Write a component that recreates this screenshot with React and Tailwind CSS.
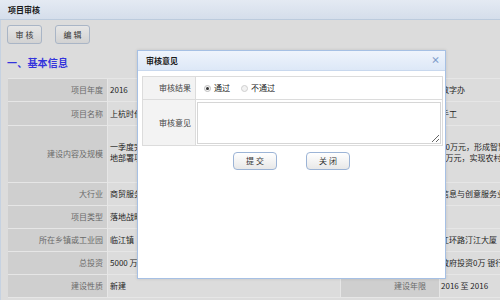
export default function App() {
  const rows = [
    { l1: '项目年度', v1: '2016', l2: '主管单位', v2: '数字办', h: 'h-[23px]' },
    { l1: '项目名称', v1: '上杭时代智慧城市建设项目', l2: '建设单位', v2: '手工', h: 'h-[24px]' },
    { l1: '建设内容及规模', v1: ['一季度完成项目前期工作', '地部署项目建设'], l2: '', v2: ['00万元，形成智慧产业', '5万元，实现农村电商全覆盖'], h: 'h-[57px]' },
    { l1: '大行业', v1: '商贸服务业', l2: '小行业', v2: '信息与创意服务业', h: 'h-[23px]' },
    { l1: '项目类型', v1: '落地战略性新兴产业', l2: '项目属性', v2: '', h: 'h-[23px]' },
    { l1: '所在乡镇或工业园', v1: '临江镇', l2: '项目地址', v2: '江环路汀江大厦', h: 'h-[23px]' },
    { l1: '总投资', v1: '5000 万元', l2: '资金来源', v2: '政府投资0万 银行贷款', h: 'h-[23px]' },
    { l1: '建设性质', v1: '新建', l2: '建设年限', v2: '2016 至 2016', h: 'h-[23px]' },
  ];

  const renderVal = (v) =>
    Array.isArray(v) ? (
      <div className="flex flex-col leading-[11px] pb-[4px]">
        {v.map((t, i) => (
          <span key={i} className="whitespace-nowrap">{t}</span>
        ))}
      </div>
    ) : (
      <span className="whitespace-nowrap">{v}</span>
    );

  return (
    <div className="relative w-[500px] h-[300px] overflow-hidden bg-[#dcdcdc] font-['Noto_Sans_CJK_SC',sans-serif] text-[8px] text-[#1e1e1e]">
      {/* panel header */}
      <div className="h-[20px] flex items-center pl-[8px] bg-gradient-to-b from-[#e4eaf3] to-[#d5deeb] border-b border-[#bccbdd] font-bold text-[#1a1a1a]">
        项目审核
      </div>
      <div className="border-l border-[#c6d2e1] h-[280px] flex flex-col">
        {/* toolbar */}
        <div className="flex gap-[13px] pl-[6px] pt-[5px]">
          <div className="w-[35px] h-[19px] rounded-[3px] border border-[#a9b5c6] bg-gradient-to-b from-[#e6e6e6] to-[#d2d2d2] flex items-center justify-center text-[#333]">
            审 核
          </div>
          <div className="w-[35px] h-[19px] rounded-[3px] border border-[#a9b5c6] bg-gradient-to-b from-[#e6e6e6] to-[#d2d2d2] flex items-center justify-center text-[#333]">
            编 辑
          </div>
        </div>
        {/* heading */}
        <div className="mt-[9px] h-[20px] leading-[20px] pl-[6px] text-[10px] font-bold text-[#3434dc] tracking-[0.2px]">
          一、基本信息
        </div>
        {/* table */}
        <div className="mt-[5px] ml-[7px] w-[600px] border-t border-[#e6e6e6] flex flex-col">
          {rows.map((r, i) => (
            <div key={i} className={`flex ${r.h} border-b border-[#e6e6e6]`}>
              <div className="w-[100px] shrink-0 bg-[#cfcfcf] border-r border-[#e6e6e6] flex items-center justify-end pr-[4px] text-[#6a6a6a]">
                {r.l1}
              </div>
              <div className="w-[232px] shrink-0 flex items-center pl-[2px] overflow-hidden">
                {renderVal(r.v1)}
              </div>
              <div className="w-[100px] shrink-0 bg-[#cfcfcf] border-x border-[#e6e6e6] flex items-center justify-end pr-[13px] text-[#6a6a6a]">
                {r.l2}
              </div>
              <div className="flex-1 flex items-center pl-[1px] overflow-hidden">
                {renderVal(r.v2)}
              </div>
            </div>
          ))}
        </div>
      </div>

      {/* dialog */}
      <div className="absolute left-[137px] top-[50px] w-[309px] h-[229px] border border-[#a6c0e4] bg-white shadow-[0_0_3px_rgba(0,0,0,0.12)] flex flex-col">
        <div className="relative h-[20px] shrink-0 flex items-center pl-[8px] bg-gradient-to-b from-[#eff4fc] to-[#dde8f7] border-b border-[#c8d8ee] font-bold text-[#1a1a1a]">
          审核意见
          <span className="absolute right-[5px] top-[3px] text-[9px] leading-[12px] text-[#7d9dca]">×</span>
        </div>
        <div className="mt-[5px] ml-[4px] w-[301px] border border-[#dcdcdc] flex flex-col text-[#222]">
          <div className="flex h-[23px] border-b border-[#dcdcdc]">
            <div className="w-[53px] shrink-0 bg-[#f3f3f3] border-r border-[#dcdcdc] flex items-center justify-end pr-[4px] text-[#444]">
              审核结果
            </div>
            <div className="flex items-center pl-[8px]">
              <span className="w-[7px] h-[7px] rounded-full border border-[#bdbdbd] bg-[#f4f4f4] flex items-center justify-center">
                <span className="w-[3px] h-[3px] rounded-full bg-[#333]"></span>
              </span>
              <span className="ml-[3px]">通过</span>
              <span className="ml-[11px] w-[7px] h-[7px] rounded-full border border-[#cfcfcf] bg-[#f2f2f2]"></span>
              <span className="ml-[3px]">不通过</span>
            </div>
          </div>
          <div className="flex h-[45px]">
            <div className="w-[53px] shrink-0 bg-[#f3f3f3] border-r border-[#dcdcdc] flex items-center justify-end pr-[4px] text-[#444]">
              审核意见
            </div>
            <div className="flex-1 pl-[1px] pt-[2px]">
              <textarea className="block w-[244px] h-[42px] border border-[#d6d6d6] outline-none bg-white"></textarea>
            </div>
          </div>
        </div>
        <div className="mt-[6px] flex justify-center gap-[29px]">
          <div className="w-[44px] h-[18px] rounded-[4px] border border-[#9cb4d6] bg-gradient-to-b from-[#ffffff] to-[#e8e8e8] flex items-center justify-center text-[#333]">
            提 交
          </div>
          <div className="w-[44px] h-[18px] rounded-[4px] border border-[#9cb4d6] bg-gradient-to-b from-[#ffffff] to-[#e8e8e8] flex items-center justify-center text-[#333]">
            关 闭
          </div>
        </div>
      </div>
    </div>
  );
}
